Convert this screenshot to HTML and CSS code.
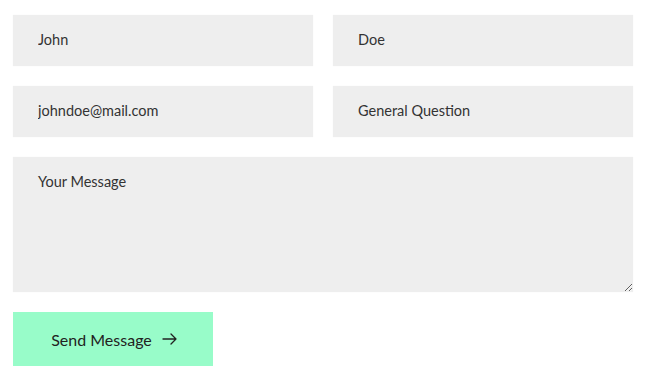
FILE: index.html
```html
<!DOCTYPE html>
<html lang="en">
<head>
    <meta charset="UTF-8">
    <meta name="viewport" content="width=device-width, initial-scale=1.0">
    <title>Contact</title>
    <link rel="stylesheet" href="styles.css">
</head>
<body>
    <form class="contact-form">
        <div class="form-row">
            <input type="text" name="firstName" value="John">
            <input type="text" name="lastName" value="Doe">
        </div>
        <div class="form-row">
            <input type="email" name="email" value="johndoe@mail.com">
            <input type="text" name="subject" value="General Question">
        </div>
        <textarea name="message" placeholder="Your Message"></textarea>
        <button type="submit" class="send-btn">
            Send Message
            <svg width="15" height="12" viewBox="0 0 15 12" fill="none" stroke="#222" stroke-width="1.3" stroke-linecap="round" stroke-linejoin="round">
                <path d="M1 6h13M9 1l5 5-5 5"/>
            </svg>
        </button>
    </form>
</body>
</html>
```

FILE: styles.css
```css
/* Base */
* {
    margin: 0;
    padding: 0;
    box-sizing: border-box;
}

body {
    font-family: Lato, "Noto Sans", sans-serif;
    background: #fff;
    color: #333;
    padding: 15px 13px;
}

/* Contact form */
.contact-form {
    width: 620px;
    display: flex;
    flex-direction: column;
    gap: 20px;
}

.form-row {
    display: flex;
    gap: 20px;
}

.contact-form input,
.contact-form textarea {
    width: 300px;
    height: 51px;
    padding: 0 25px 2px;
    background-color: #eeeeee;
    border: none;
    outline: none;
    font-family: inherit;
    font-size: 14.5px;
    color: #333;
    box-shadow: 0 0 1px rgba(0, 0, 0, 0.06);
}

.contact-form textarea {
    width: 620px;
    height: 135px;
    padding: 16px 25px;
    resize: vertical;
    display: block;
}

.contact-form textarea::placeholder {
    color: #333;
}

.send-btn {
    width: 200px;
    height: 54px;
    background-color: #98fcc9;
    border: none;
    font-family: inherit;
    font-size: 16px;
    color: #222;
    display: flex;
    align-items: center;
    justify-content: center;
    gap: 10px;
    padding-left: 2px;
    cursor: pointer;
}
```
